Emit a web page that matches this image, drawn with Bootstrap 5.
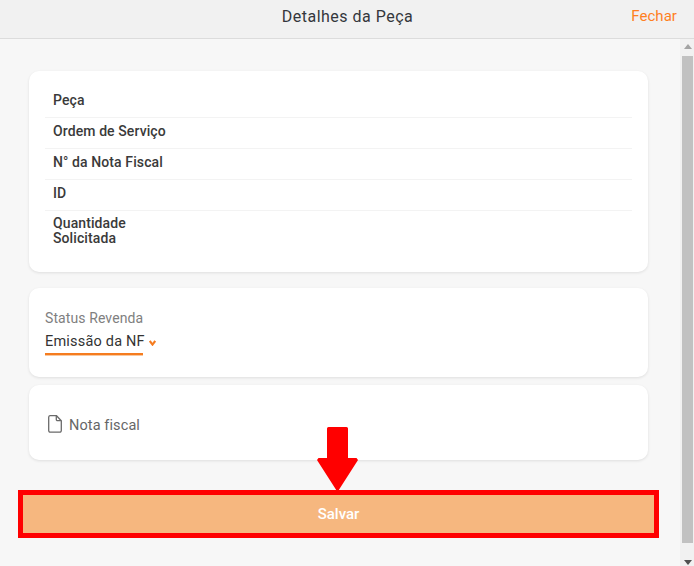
<!DOCTYPE html>
<html lang="pt">
<head>
<meta charset="utf-8">
<title>Detalhes da Peça</title>
<link href="https://cdn.jsdelivr.net/npm/bootstrap@5.3.0/dist/css/bootstrap.min.css" rel="stylesheet">
<style>
html,body{height:566px;overflow:hidden}
body{background:#f7f7f7;font-family:Roboto,"Liberation Sans",sans-serif;color:#333;position:relative}
.top-strip{height:39px;background:#f1f1f1;border-bottom:1px solid #dcdcdc;position:relative;padding-top:7px}
.top-title{font-size:16px;line-height:19px;letter-spacing:.5px;color:#34373c;text-align:center;width:695px}
.top-close{position:absolute;right:17px;top:7px;font-size:15px;line-height:19px;color:#ff7f1f;letter-spacing:.05px;text-decoration:none}
.view{height:527px}
.pane{width:680px;padding:32px 21px 0 18px}
.sheet{background:#fff;border:0;border-radius:10px;box-shadow:0 1px 3px rgba(0,0,0,.1);margin:0 11px}
.sheet-info{padding:16px 16px 16px;height:201px}
.info-line{padding:0 8px;height:31px;border-bottom:1px solid #f3f3f3;background:transparent;font-size:14px;font-weight:500;line-height:26px;letter-spacing:.1px;color:#3a3a3a}
.info-line.tall{height:45px;padding-top:5px;line-height:14.5px;width:100%}
.sheet-status{margin-top:16px;height:89px;padding:21px 16px 0}
.status-label{font-size:14px;line-height:18px;color:#808080;letter-spacing:.1px}
.status-value{font-size:14.5px;line-height:20px;letter-spacing:.2px;color:#333;margin-top:5px}
.status-text{border-bottom:2px solid #f57c1f;box-shadow:0 1px 0 #f9c9a0;padding-bottom:1px;width:98px;white-space:nowrap;display:block}
.chev{margin-left:6px;margin-top:8px}
.sheet-file{margin-top:8px;height:75px;padding:30px 19px 0;color:#666;font-size:14.5px;line-height:20px;letter-spacing:.1px}
.file-row{gap:7px}
.file-name{margin-top:1px}
.save-btn{display:block;width:641px;height:48px;margin-top:30px;background:#f6b77f;border:5px solid #f00;border-radius:0;color:#fff;font-size:15px;font-weight:500;padding:0}
.save-btn:hover{background:#f6b77f;border-color:#f00;color:#fff}
.rail{width:14px;height:527px;background:#f1f1f1;padding:0 1px 0 2px}
.rail-up{height:17px;padding-top:5px}
.rail-thumb{height:487px;background:#c1c1c1}
.rail-down{height:23px;padding-top:17px}
.mark-arrow{position:absolute;left:317px;top:427px}
</style>
</head>
<body>
<div class="top-strip">
  <div class="top-title">Detalhes da Peça</div>
  <a class="top-close" href="#">Fechar</a>
</div>
<div class="view d-flex">
  <div class="pane">
    <div class="card sheet sheet-info">
      <div class="list-group list-group-flush">
        <div class="list-group-item info-line">Peça</div>
        <div class="list-group-item info-line">Ordem de Serviço</div>
        <div class="list-group-item info-line">N° da Nota Fiscal</div>
        <div class="list-group-item info-line">ID</div>
        <div class="list-group-item info-line tall">Quantidade<br>Solicitada</div>
      </div>
    </div>
    <div class="card sheet sheet-status">
      <div class="status-label">Status Revenda</div>
      <div class="status-value d-flex align-items-start">
        <span class="status-text">Emissão da NF</span>
        <svg class="chev" width="7" height="6" viewBox="0 0 7 6"><path d="M.8 1 3.500 4.600 6.200 1" fill="none" stroke="#f57c1f" stroke-width="2.100"/></svg>
      </div>
    </div>
    <div class="card sheet sheet-file">
      <div class="d-flex align-items-start file-row">
        <svg width="14" height="18" viewBox="0 0 14 18"><path d="M2 .7h6.500l4.800 5v9.800a1.600 1.600 0 0 1-1.600 1.700H2.300A1.600 1.600 0 0 1 .7 15.500V2.300A1.600 1.600 0 0 1 2 .7Z" fill="none" stroke="#6a6a6a" stroke-width="1.300"/><path d="M8.300 .9v3.600a1.200 1.200 0 0 0 1.200 1.200h3.600" fill="none" stroke="#6a6a6a" stroke-width="1.300"/></svg>
        <span class="file-name">Nota fiscal</span>
      </div>
    </div>
    <button type="button" class="btn save-btn">Salvar</button>
  </div>
  <div class="rail">
    <div class="rail-up"><svg class="d-block mx-auto" width="8" height="5" viewBox="0 0 8 5"><path d="M4 0 8 5H0Z" fill="#a3a3a3"/></svg></div>
    <div class="rail-thumb"></div>
    <div class="rail-down"><svg class="d-block mx-auto" width="8" height="5" viewBox="0 0 8 5"><path d="M0 0H8L4 5Z" fill="#505050"/></svg></div>
  </div>
</div>
<svg class="mark-arrow" width="41" height="65" viewBox="0 0 41 65"><path d="M10 1.500Q10 0 11.500 0H29.500Q31 0 31 1.500V31H39.500L41 33 20.500 65 0 33 1.500 31H10Z" fill="#f00"/></svg>
<script src="https://cdn.jsdelivr.net/npm/bootstrap@5.3.0/dist/js/bootstrap.bundle.min.js"></script>
</body>
</html>
